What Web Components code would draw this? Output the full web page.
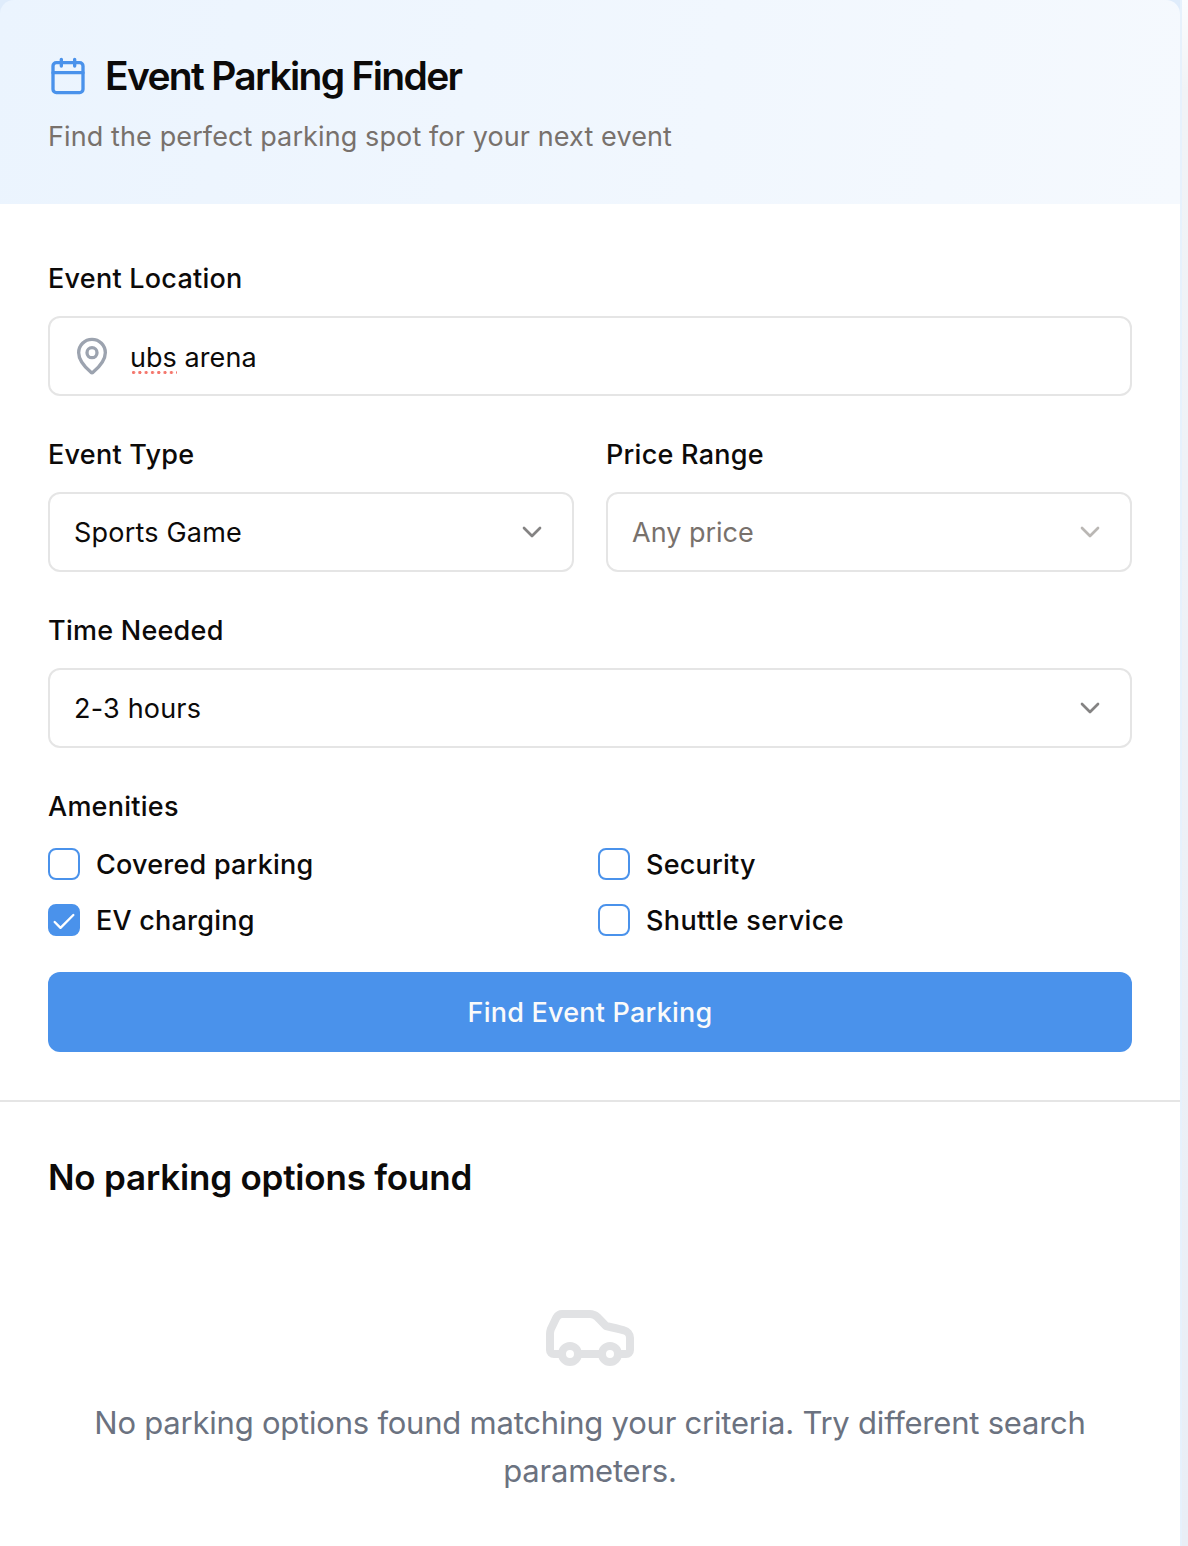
<!DOCTYPE html>
<html lang="en">
<head>
<meta charset="utf-8">
<title>Event Parking Finder</title>
<style>
html,body{margin:0;height:100%}
body{font-family:Inter,"Liberation Sans",sans-serif;color:#0c0a09;background:#fff;overflow:hidden;
--primary:#4a92eb;--muted:#78716c;--line:#e5e5e5}
</style>
</head>
<body>
<parking-finder></parking-finder>
<script>
const define = (name, html, init) => customElements.define(name, class extends HTMLElement {
  constructor() {
    super();
    const t = document.createElement('template');
    t.innerHTML = html;
    this.attachShadow({ mode: 'open' }).append(t.content.cloneNode(true));
  }
  connectedCallback() { if (init) init(this, this.shadowRoot); }
});

const icons = {
  calendar: '<rect x="3" y="4" width="18" height="18" rx="2"/><path d="M16 2v4M8 2v4M3 10h18"/>',
  pin: '<path d="M20 10c0 4.993-5.539 10.193-7.399 11.799a1 1 0 0 1-1.202 0C9.539 20.193 4 14.993 4 10a8 8 0 0 1 16 0"/><circle cx="12" cy="10" r="3"/>',
  chevron: '<path d="m6 9 6 6 6-6"/>',
  check: '<path d="M20 6 9 17l-5-5"/>',
  car: '<path d="M19 17h2c.6 0 1-.4 1-1v-3c0-.9-.7-1.7-1.5-1.9C18.7 10.6 16 10 16 10s-1.3-1.4-2.2-2.3c-.5-.4-1.1-.7-1.8-.7H5c-.6 0-1.1.4-1.4.9l-1.4 2.9A3.7 3.7 0 0 0 2 12v4c0 .6.4 1 1 1h2"/><circle cx="7" cy="17" r="2"/><path d="M9 17h6"/><circle cx="17" cy="17" r="2"/>'
};
define('line-icon', `<style>:host{display:block;flex:none;width:var(--size,40px);height:var(--size,40px)}
svg{display:block;width:100%;height:100%;fill:none;stroke:currentColor;stroke-width:2;stroke-linecap:round;stroke-linejoin:round}</style>
<svg viewBox="0 0 24 24"></svg>`, (el, root) => {
  root.querySelector('svg').innerHTML = icons[el.getAttribute('name')];
});

define('finder-header', `<style>
:host{display:flex;flex-direction:column;gap:13px;box-sizing:border-box;height:204px;padding:48px;border-radius:14px 14px 0 0;background:linear-gradient(100deg,#ebf4fe,#f5f9fe)}
div{display:flex;align-items:center;gap:17px;height:56px}
line-icon{color:var(--primary)}
h1{margin:0;font-size:39px;line-height:56px;font-weight:600;letter-spacing:-1.68px;white-space:nowrap}
p{margin:0;font-size:27px;line-height:40px;color:var(--muted);letter-spacing:.11px}
</style><div><line-icon name="calendar"></line-icon><h1><slot name="title"></slot></h1></div><p><slot></slot></p>`);

define('form-field', `<style>
:host{display:flex;flex-direction:column;gap:23px;flex:1;min-width:0}
label{padding-top:1px;font-size:27px;line-height:28px;font-weight:500;letter-spacing:.25px;white-space:nowrap}
</style><label></label><slot></slot>`, (el, root) => {
  root.querySelector('label').textContent = el.getAttribute('label');
});

define('text-box', `<style>
:host{display:flex;align-items:center;gap:18px;box-sizing:border-box;height:80px;padding:0 22px;border:2px solid var(--line);border-radius:12px;font-size:27px;line-height:40px;letter-spacing:.06px;white-space:nowrap}
line-icon{color:#9ca3af}
span{padding-top:3px}
</style><line-icon name="pin"></line-icon><span><slot></slot></span>`);

define('misspelled-word', `<style>
:host{display:inline-block;line-height:33px;background:radial-gradient(circle at 1.6px 1.5px,#f4776d 1.3px,transparent 1.9px) 2px 100%/6.3px 3px repeat-x}
</style><slot></slot>`);

define('select-box', `<style>
:host{display:flex;align-items:center;justify-content:space-between;box-sizing:border-box;height:80px;padding:0 24px;border:2px solid var(--line);border-radius:12px;font-size:27px;line-height:40px;letter-spacing:.2px;white-space:nowrap}
:host([placeholder]){color:var(--muted);letter-spacing:0}
span{padding-top:2px}
line-icon{--size:32px;opacity:.5}
</style><span><slot></slot></span><line-icon name="chevron"></line-icon>`);

define('check-option', `<style>
:host{display:flex;align-items:center;gap:16px;height:32px;font-size:27px;line-height:32px;font-weight:500;letter-spacing:var(--ls,.22px);white-space:nowrap}
span{padding-top:2px}
i{display:flex;box-sizing:border-box;width:32px;height:32px;border:2px solid var(--primary);border-radius:8px;color:#fff;padding:2px 0 0}
line-icon{--size:28px;display:none}
:host([checked]) i{background:var(--primary)}
:host([checked]) line-icon{display:block}
</style><i><line-icon name="check"></line-icon></i><span><slot></slot></span>`);

define('primary-button', `<style>
button{display:block;width:100%;height:80px;padding:2px 0 0;border:0;border-radius:12px;background:var(--primary);color:#fafafa;font:500 27px/40px Inter,"Liberation Sans",sans-serif;letter-spacing:.22px}
</style><button><slot></slot></button>`);

define('parking-form', `<style>
:host{display:flex;flex-direction:column;gap:44px;padding:60px 48px 48px;border-bottom:2px solid var(--line)}
.row{display:flex;gap:32px}
.grid{display:grid;grid-template-columns:1fr 1fr;gap:24px 16px;margin-top:4px}
.last{display:flex;flex-direction:column;gap:36px}
.wide{--ls:.36px}
</style>
<form-field label="Event Location"><text-box><misspelled-word>ubs</misspelled-word> arena</text-box></form-field>
<div class="row">
<form-field label="Event Type"><select-box>Sports Game</select-box></form-field>
<form-field label="Price Range"><select-box placeholder>Any price</select-box></form-field>
</div>
<form-field label="Time Needed"><select-box>2-3 hours</select-box></form-field>
<div class="last">
<form-field label="Amenities"><div class="grid">
<check-option>Covered parking</check-option><check-option>Security</check-option>
<check-option checked>EV charging</check-option><check-option class="wide">Shuttle service</check-option>
</div></form-field>
<primary-button>Find Event Parking</primary-button>
</div>`);

define('empty-results', `<style>
:host{display:block;padding:47px 48px}
h2{margin:0 0 1px;font-size:35px;line-height:56px;font-weight:600;letter-spacing:-.2px}
div{display:flex;flex-direction:column;align-items:center;gap:17px;padding-top:80px}
line-icon{--size:96px;color:#e1e2e4}
p{margin:0;font-size:31px;line-height:48px;color:#6b7280;text-align:center;letter-spacing:-.22px}
</style><h2><slot name="title"></slot></h2><div><line-icon name="car"></line-icon><p><slot></slot></p></div>`);

define('parking-finder', `<style>
:host{display:flex;height:1546px;background:linear-gradient(#fbfcfe,#f1f3f6 90px,#eff2f7 500px,#e9eef6)}
main{width:1180px;flex:none;background:linear-gradient(#dfecfb 30px,#fff 30px);border-right:2px solid #e7f1fc}
</style>
<main>
<finder-header><span slot="title">Event Parking Finder</span>Find the perfect parking spot for your next event</finder-header>
<parking-form></parking-form>
<empty-results><span slot="title">No parking options found</span>No parking options found matching your criteria. Try different search<br>parameters.</empty-results>
</main>`);
</script>
</body>
</html>
